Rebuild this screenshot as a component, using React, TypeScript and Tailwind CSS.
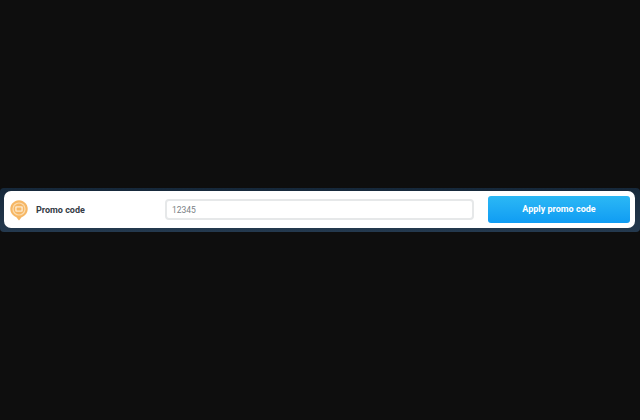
export default function App() {
  return (
    <div className="flex h-[420px] w-[640px] items-center bg-[#0e0e0e] font-['Roboto','Liberation_Sans',sans-serif]">
      <div className="h-[44px] w-full rounded-[4px] bg-gradient-to-b from-[#16283a] to-[#24394e] pt-[3px] pl-[4px] pr-[5px]">
        <div className="flex h-[37px] items-center rounded-[7px] bg-white pl-[6px] pr-[5px]">
          <svg width="18" height="22" viewBox="0 0 18 22" className="shrink-0">
            <path d="M9 21.5 L6.4 18.2 A8.7 8.7 0 1 1 11.6 18.2 Z" fill="#f6b765" />
            <circle cx="9" cy="10" r="6.6" fill="#fbdcae" />
            <circle cx="9" cy="10" r="5.4" fill="#f6b765" />
            <rect x="5.2" y="7.2" width="7.6" height="5.6" rx="1" fill="#fde9cc" />
            <rect x="6.6" y="8.5" width="4.8" height="3" rx="0.5" fill="#f6b765" />
          </svg>
          <span className="ml-[8px] w-[129px] shrink-0 pt-[2px] text-[9px] font-bold text-[#343b45]">Promo code</span>
          <input
            readOnly
            value="12345"
            className="h-[21px] w-[309px] shrink-0 rounded-[4px] border-2 border-[#e6e8e9] bg-white px-[5px] text-[8.5px] text-[#7a7f85] outline-none"
          />
          <button className="ml-[14px] h-[27px] w-[142px] shrink-0 rounded-[3px] bg-gradient-to-b from-[#2bb8f5] to-[#0f9cf3] pt-[1px] text-[9px] font-bold text-white">
            Apply promo code
          </button>
        </div>
      </div>
    </div>
  );
}
